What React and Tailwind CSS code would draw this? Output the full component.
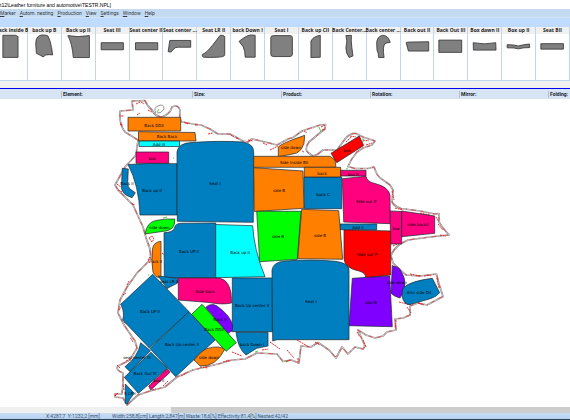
const menuItems = ['Marker', 'Autom. nesting', 'Production', 'View', 'Settings', 'Window', 'Help'];

// thumbnails are drawn on a 102 x 90 grid
const elements = [
  { name: 'ack inside B', box: '17 0 85 90', d: 'M26 4H66L74 8V74H26Z' },
  { name: 'back up B', d: 'M24 31Q24 14 30 9Q36 3 44 3Q58 3 62 6Q70 22 73 42Q76 56 76 65L66 64L55 65L47 71L38 66L26 60Z' },
  { name: 'Back up II', d: 'M18 5L50 8L85 5V73H35Q32 30 18 5Z' },
  { name: 'Seat III', d: 'M16 27H85V49H16Z' },
  { name: 'Seat center II', d: 'M17 27H86V49H17Z' },
  { name: 'Seat center ...', d: 'M21 20H86V41H48Q38 40 33 47L25 56L16 55Z' },
  { name: 'Seat LR II', d: 'M72 4Q82 3 86 8V63Q86 69 80 70Q60 74 20 72Q14 69 17 63Q28 60 48 35Z' },
  { name: 'back Down I', d: 'M25 23Q32 16 50 6Q60 1 75 4V72H44Q44 54 38 40Z' },
  { name: 'Seat I', d: 'M18 12Q18 5 26 5H78Q85 5 85 12V63Q85 69 78 70H26Q18 70 18 63Z' },
  { name: 'Back up CII', d: 'M37 73V22Q44 8 66 4V72Z' },
  { name: 'Back Center...', d: 'M40 5L57 4Q56 22 58 38L62 68L50 73Q40 60 40 43L43 22Z' },
  { name: 'Back center ...', d: 'M30 28Q31 8 48 4Q66 4 72 26Q60 26 55 31Q48 40 53 73H36Q36 60 31 50Z' },
  { name: 'Back out II', d: 'M16 27Q20 24 30 25L86 24V53H23Z' },
  { name: 'Back Out III', d: 'M15 19H86V57H15Z' },
  { name: 'Box dawn II', d: 'M16 27Q51 34 86 27L87 50H17Z' },
  { name: 'Box up II', d: 'M16 33Q36 33 51 37Q66 33 85 31L86 42Q66 42 51 46Q36 42 16 43Z' },
  { name: 'Seat BII', d: 'M15 30H85V47H15Z' },
];

const fields = ['', 'Element:', 'Size:', 'Product:', 'Rotation:', 'Mirror:', 'Folding:'];

const status = ['Width:258,8[cm]', 'Length:2,847[m]', 'Waste:18,6[%]', 'Effectivity:81,4[%]', 'Nested:42/42'];

const BLUE = '#007fc0';
const ORANGE = '#ff7f00';
const PINK = '#ff007f';
const RED = '#ff0000';
const GREEN = '#00ff00';
const CYAN = '#00ffff';
const VIOLET = '#7f00ff';

const pieces = [
  { label: 'Back DDII', x: 154, y: 126.5, fill: ORANGE, d: 'M128 117.3H180.7V131H128Z' },
  { label: 'Back Back', x: 167, y: 138, fill: ORANGE, d: 'M138.5 131.7L195 132.5L196 141H138.5Z' },
  { label: 'Add III', x: 159, y: 146, fill: CYAN, d: 'M139 141H179.5V146.5H139Z' },
  { label: 'box', x: 152, y: 159.5, fill: PINK, d: 'M136 152H168.7V163.3H136Z' },
  { label: 'Back II', x: 127, y: 185, fill: BLUE, d: 'M122.3 168.3L128.3 169L127.7 183.5Q128 187 130 189L135.3 192.7L132 197.7L126.7 195.5Q121 192 121.5 186Z' },
  { label: 'Back up II', x: 152, y: 191.5, fill: BLUE, d: 'M128 164.5L150 163.5L177 163.7V215H140Q139 185 128 164.5Z' },
  { label: 'Seat I', x: 215, y: 185, fill: BLUE, d: 'M177 152Q178 143 192 142.5Q220 140.5 243 142Q253.7 144 253.7 152L253.3 222.3L177.3 221.3Z' },
  { label: 'side down', x: 291, y: 148.5, fill: ORANGE, d: 'M278.3 156.7V147Q281 143.5 304.7 135.3Q305 154 290 154.5Z' },
  { label: 'Side inside BII', x: 294, y: 164, fill: ORANGE, d: 'M253.7 156.3H330L335 160L336 167.3H253.7Z' },
  { label: 'side B', x: 279, y: 192, fill: ORANGE, d: 'M253.7 167.7L303 171L304 208.3L254.3 211.5Z' },
  { label: 'back C', x: 323, y: 195.5, fill: BLUE, d: 'M304 177H341.7V208.7H304.5Z' },
  { label: 'back', x: 322, y: 174.5, fill: ORANGE, d: 'M304.3 167.3H340.7V177H304.3Z' },
  { label: 'box II', x: 353, y: 175.5, fill: PINK, d: 'M340.7 170.3H366V176H340.7Z' },
  { label: 'Side out P', x: 366, y: 202.5, fill: PINK, d: 'M342.3 178.7L366 176.3Q367 182 375 183.5Q389 187 390 195.5L390.3 223.7L343.7 222Z' },
  { label: 'box', x: 347, y: 151.5, fill: RED, d: 'M331 153.3L359.3 136L363.7 145.5L336.7 162.7Z' },
  { label: 'box', x: 396, y: 230, fill: PINK, d: 'M390.3 211L401.7 211.5V244H390.3Z' },
  { label: 'side backII', x: 418, y: 226, fill: PINK, d: 'M401.7 211L434.7 216V233.3L401.7 236.7Z' },
  { label: 'Side out P', x: 367, y: 255.5, fill: RED, d: 'M344 229.7L390.7 231V275L365.7 277.7Q366 273 359 271Q344 268 344 258Z' },
  { label: 'Add II', x: 358, y: 228.5, fill: BLUE, d: 'M340 224H376.7V229.7H340Z' },
  { label: 'side B', x: 371, y: 304, fill: VIOLET, d: 'M352.3 278.3L389.7 276L392.3 326.7L349 325.7Z' },
  { label: 'side down', x: 397, y: 284, fill: VIOLET, d: 'M392.3 266Q399 266 401.5 272Q409 284 400 298Q393 296 391 293Z' },
  { label: 'Arm side DII', x: 419, y: 294, fill: BLUE, d: 'M404 287.3Q411 281 432.3 278.3L439.7 292.7Q436 297 431 298.5L410 304.5Q404 305 402.3 297Q401.5 290 404 287.3Z' },
  { label: 'side down', x: 159.5, y: 228.5, fill: GREEN, d: 'M145 234Q147 222 156 220.5Q164 218.5 174.7 219Q176 231 162 231.5Z' },
  { label: 'Back UP II', x: 189, y: 253, fill: BLUE, d: 'M164 232.7Q173 232.5 174.5 228Q175 223.2 182 223.2L215.7 223V277.7H164.3Z' },
  { label: 'Back up II', x: 240, y: 254, fill: CYAN, d: 'M215.7 224.5L252.7 225.7Q254 250 265 276.7L215.7 277.7Z' },
  { label: 'ack II', x: 157, y: 262.5, fill: ORANGE, d: 'M161 241.3V277.7Q155 278 153 272Q151 262 152.5 249Q153.5 242 161 241.3Z' },
  { label: 'seat LR II', x: 169, y: 282.5, fill: BLUE, d: 'M158.3 276L177.7 278.3V283L167 288.5Z' },
  { label: 'side B', x: 278, y: 238, fill: GREEN, d: 'M256.7 211.3H301L297.3 259.3L259.7 261.7Z' },
  { label: 'side B', x: 320, y: 236.5, fill: ORANGE, d: 'M301.7 209.3L338.7 210.7L342.7 259.3L297.7 258.7Z' },
  { label: 'Back Up center II', x: 252, y: 307, fill: BLUE, d: 'M232.3 278H272.3V331.7H232.3Z' },
  { label: 'Seat I', x: 311, y: 302.5, fill: BLUE, d: 'M272 270Q273 262 285 261Q312 259 335 261.3Q349 263 349 270V339.7H277L272.7 341Z' },
  { label: 'back Down I', x: 252, y: 346, fill: BLUE, d: 'M236 332.3H268V346L256.7 348.3L246 355Q238 349 236 332.3Z' },
  { label: 'Side back', x: 205, y: 293, fill: PINK, d: 'M178.3 278H219Q232 280 231.5 303Q222 305 209 302.5L178.3 300Z' },
  { label: 'Back UP II', x: 150, y: 313, fill: BLUE, d: 'M152.7 274.3L189 311.7L149.3 348L122.7 320Q125 312 120.7 304.3Z' },
  { label: 'Back Up center II', x: 182, y: 346, fill: BLUE, d: 'M189 311.7L215 340L175.7 376.7L150 348.5Z' },
  { label: 'Back II', x: 220, y: 320.5, fill: VIOLET, d: 'M205.7 307.3Q211 302.5 217 306Q231 316 232.7 326L232 331L227.7 333.3Z' },
  { label: 'Back DDII', x: 214, y: 330.5, fill: GREEN, d: 'M202 304.3L236.3 342.7L226 351.3L191.7 314.3Z' },
  { label: 'side down', x: 209, y: 358.5, fill: ORANGE, d: 'M194 360Q201 351 207 348.5Q219 345 224.7 349.3Q216 367 200 366Z' },
  { label: 'seat center III', x: 137, y: 359, fill: BLUE, d: 'M140.7 342.7L150.5 350.7L130 371.7L125 366.7Q138 357 140.7 342.7Z' },
  { label: 'Back Out III', x: 145, y: 375, fill: BLUE, d: 'M151 352.3L167.3 368.3L138.3 393.3L124.3 377.3Z' },
  { label: 'box II', x: 159, y: 381.5, fill: PINK, d: 'M167.3 368.7L170 372.3L150.7 390L148.7 386Z' },
  { label: 'S LR I', x: 130, y: 395, fill: BLUE, d: 'M125.3 384L134.3 393.3Q130 398 127.3 404L125.3 403.3Z' },
];

const hide =
  'M132 101L145 100.5Q147 106 152 110Q156 118 163 116.5Q170 114 172 107Q178 104 180 110Q179 120 182 122L193 124L201 125L210 129L218 134L230 134L243 141L248 142L252 139L267 142.5L277 145L288 139L293 137.5L302 131L320 125L325.5 124.5L325 129L321 132L309 142Q304 149 308 152.5L313 156L318 154L323 150L337 150L345 139Q350 133 356 133.5L363 137L375 141L372 145L363 148L357 152Q351 159 348 166.5L355 168.5L368 168.5L374 167L376 172Q378 177 383 180L390 185L393 190L392 202Q394 206 401 208.5L420 211L435 214L439 213.5L439 222L443 228L449 235L430 237L408 240L400 244Q392 251 391 256L393 263L406 275L420 276L436.5 274L439 284L443 296.5L427 305L418 303L410 306V315L403 318L395 319L396 330L387 332L383 336L375 338L366 335L358 330L365 346L363 349L355 347L348 354L342 347L336 358L329 350L318 342.5L311 347L301 346L299 363L291 360L283 361.5L277 354L257 353L245 359L232 360L220 363.5L193 370L177 377L165 387L150 391L138 395L127 405L123 398L115 397V394L122 394L123 383L123 373Q115 370 118 366L130 360L137 348L135 341L124 325L118 313L120 300L127 287L137 273L150 260Q152 251 147 241L143 227L133 205L118 190L115 185L125 167L136 155L138 140L125 132Q119 125 120 111L133 110Z';

const marks =
  'M136 104l4-2M141 102l3 2M148 110l4 2M121 116h3M120 124l3 1M137 115l3-2M184 122l4 2M195 125h3M208 134l5-1M231 135l3 2M236 138l3 1M248 140l5 1M263 143l4 2M270 150l8-4M293 140l4 2M304 131l3 2M321 127l4-2M322 130l3-1M346 142l5-5M350 136l6 1M363 140l6 1M366 145l6-2M302 151l2 1M392 191l2 9M395 208l8 2M420 213l10 2M436 217l3 5M438 224l5 6M440 235l6 1M393 246l4-2M392 265l6 5M410 274l10 2M424 276l8-1M437 278l2 10M399 302l12 3M407 307l4 6M418 303l6 2M396 320l-1 8M357 332l3 5M363 340l3 7M270 342l10 7M297 340l12 7M315 342l5 3M287 350l7 8M232 352l10 4M262 350l6-1M286 362l4-2M298 358v6M200 367l8 1M223 362l6-2M181 376l4-2M168 381l-5 5M152 390l4-1M118 393l-3 3M124 390l-1-6M120 368l-3-3M126 361l5-2M133 342l-3-5M124 322l3 2M119 310l2-3M123 295l3-2M127 285l2-4M149 238l3-2l2 3l-2 3zM148 260l2-3l2 3l-2 3zM162 253l3 2M132 204l3 1M117 184l4 3M118 190l4 2M136 178l2 1';

export default function App() {
  return (
    <div className="min-h-screen flex flex-col overflow-hidden bg-white font-['Roboto','Liberation_Sans',sans-serif] text-[5px] leading-[8px] text-[#333b48]">
      <header>
        <h1 className="h-[9px] pt-px whitespace-pre font-['Liberation_Sans',sans-serif] text-black">t12\Leather furniture and automotive\TESTR.NPL]</h1>
        <nav className="flex gap-1 h-2 bg-[#c3daf0]">
          {menuItems.map((item) => (
            <button key={item} type="button" className="whitespace-nowrap">
              <u>{item[0]}</u>{item.slice(1)}
            </button>
          ))}
        </nav>
        <div className="h-[10px] bg-[#bfdbff] border-t border-[#d2e4f8]" />
      </header>

      <section className="grid grid-cols-[28fr_repeat(16,34fr)] h-[54px] border-b border-[#bfd6ec]">
        {elements.map((el) => (
          <figure key={el.name} className="min-w-0 border-r border-[#bfd6ec]">
            <figcaption className="h-[7px] flex justify-center bg-[#f0f0f0] font-bold font-['Open_Sans',sans-serif] leading-[7px] text-[#222] whitespace-nowrap">
              {el.name}
            </figcaption>
            <svg viewBox={el.box || '0 0 102 90'} className="block w-full">
              <path d={el.d} fill="#808080" stroke="#303030" strokeWidth="2.5" />
            </svg>
          </figure>
        ))}
      </section>

      <div className="h-[7px] bg-[#f0f0f0]" />
      <div className="grid grid-cols-[61fr_131fr_89fr_89fr_89fr_89fr_22fr] h-[11px] border-t border-[#0000f0] bg-[#d6e4f4]">
        {fields.map((field) => (
          <div key={field} className={field ? 'my-[2px] pl-px border-l border-[#b4c0cf] font-bold leading-[7px] text-[#20262e] whitespace-nowrap' : ''}>
            {field}
          </div>
        ))}
      </div>

      <main className="grow">
        <svg viewBox="0 99 570 308" className="block w-full">
          <path d={hide} fill="none" stroke="#8a8484" strokeWidth="1.7" strokeLinejoin="round" />
          <path d={hide} fill="none" stroke="#ffffff" strokeWidth="0.5" strokeLinejoin="round" />
          <path d={hide} fill="none" stroke="#e23b3b" strokeWidth="0.8" strokeDasharray="3 4 1 4 5 5" />
          <path d="M156 113Q153 108 158 106Q164 103 164 109Q161 114 157 113" fill="none" stroke="#777777" strokeWidth="0.8" />
          <path d={marks} fill="none" stroke="#e01818" strokeWidth="0.9" strokeDasharray="2 0.7" />
          <path d="M157 112l2-3M319 127l2 5M363 138v4M346 169l2-1M173 158h1M148 275h1M163 218l4-1M255 352l3-1M285 361h2" fill="none" stroke="#30c030" strokeWidth="0.8" />
          {pieces.map((piece, i) => (
            <path key={i} d={piece.d} fill={piece.fill} stroke="#1c2a33" strokeWidth="0.7" strokeLinejoin="round" />
          ))}
          <g fontSize="4" textAnchor="middle" fill="#000000" fontFamily="'DejaVu Sans', sans-serif">
            {pieces.map((piece, i) => (
              <text key={i} x={piece.x} y={piece.y}>{piece.label}</text>
            ))}
          </g>
        </svg>
      </main>

      <footer>
        <div className="h-[6px] bg-[#f0f0f0] flex justify-end">
          <div className="w-[70%] bg-[#cdcdcd]" />
        </div>
        <div className="h-[7px] flex pl-[46px] bg-linear-to-b from-[#c9ddf2] to-[#b3d2f4] border-b border-[#34424f] leading-[6px] text-[#3c5270] whitespace-nowrap">
          <span className="w-[66px]">X:4287,7&nbsp; Y:1232,2 [mm]</span>
          <div className="flex gap-px">
            {status.map((text) => (
              <span key={text}>{text}</span>
            ))}
          </div>
        </div>
      </footer>
    </div>
  );
}
